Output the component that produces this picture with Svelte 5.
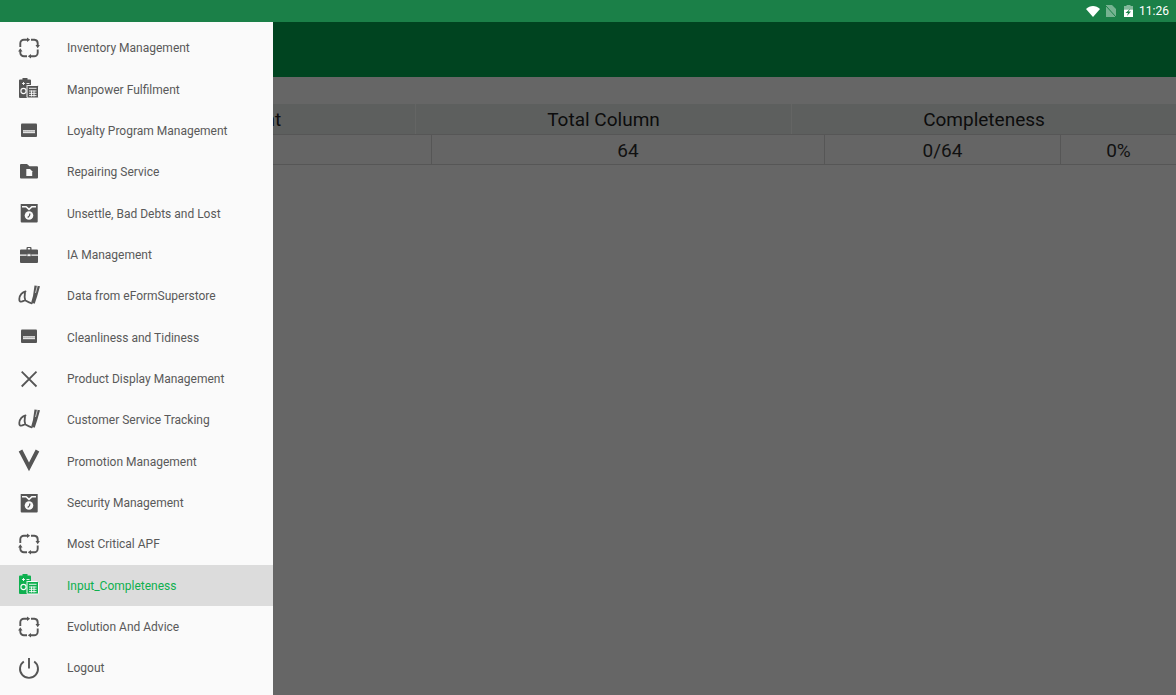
<script>
  const items = [
    ['Inventory Management', 'cycle'],
    ['Manpower Fulfilment', 'calc'],
    ['Loyalty Program Management', 'card'],
    ['Repairing Service', 'folder'],
    ['Unsettle, Bad Debts and Lost', 'box'],
    ['IA Management', 'case'],
    ['Data from eFormSuperstore', 'sign'],
    ['Cleanliness and Tidiness', 'card'],
    ['Product Display Management', 'cross'],
    ['Customer Service Tracking', 'sign'],
    ['Promotion Management', 'vee'],
    ['Security Management', 'box'],
    ['Most Critical APF', 'cycle'],
    ['Input_Completeness', 'calc'],
    ['Evolution And Advice', 'cycle'],
    ['Logout', 'power']
  ];
  const active = 'Input_Completeness';
</script>

<div class="screen">
  <header class="status">
    <svg class="wifi" width="14" height="11" viewBox="0 0 14 11"><path d="M0 3C4-1 10-1 14 3L7 11z" fill="#fff"/></svg>
    <svg class="sim" width="10" height="12" viewBox="0 0 10 12"><path d="M0 0h6l4 4v8H0z" fill="#fff" opacity=".4"/><path d="M0 1l10 11" stroke="#1b8048" stroke-width="1"/></svg>
    <svg class="batt" width="9" height="12" viewBox="0 0 9 12"><path d="M2.500 0h4v1H9v3.500H0V1h2.500z" fill="#fff" opacity=".45"/><path d="M0 4.500h9V12H0z" fill="#fff"/><path d="M6.500 3.500L1.500 8H4l-1 3L7 6.500H4.500z" fill="#1b8048"/></svg>
    <span class="time">11:26</span>
  </header>

  <div class="toolbar"></div>

  <main class="content">
    <div class="thead">
      <div class="th w1">Total Department</div>
      <div class="th w2">Total Column</div>
      <div class="th w3">Completeness</div>
    </div>
    <div class="tbody">
      <div class="td c1"></div>
      <div class="td c2">64</div>
      <div class="td c3">0/64</div>
      <div class="td c4">0%</div>
    </div>
  </main>

  <nav class="drawer">
    {#each items as [label, icon]}
      <div class="item" class:active={label === active}>
        <svg class="icon" width="24" height="24" viewBox="0 0 24 24">
          {#if icon === 'cycle'}
            <g fill="none" stroke="currentColor" stroke-width="1.900">
              <path d="M3.300 11V7.300a3.600 3.600 0 0 1 3.600-3.600H10.500"/>
              <path d="M14 3.700h3.400a3.600 3.600 0 0 1 3.300 3.600V9.500"/>
              <path d="M20.700 13.500v3.200a3.600 3.600 0 0 1-3.600 3.600H13.500"/>
              <path d="M10 20.300H6.900a3.600 3.600 0 0 1-3.600-3.600V15"/>
            </g>
            <path fill="currentColor" d="M10 1.500L13.200 3.700 10 5.900zM18.500 9h4.400L20.700 12.200zM14 18.100v4.400L10.800 20.300zM1.100 15.500h4.400L3.300 12.300z"/>
          {:else if icon === 'calc'}
            <path fill="currentColor" d="M2 3.500a1 1 0 0 1 1-1h2.500V1h5v1.500H13a1 1 0 0 1 1 1V21H3a1 1 0 0 1-1-1z"/>
            <path fill="none" stroke="#fafafa" stroke-width=".9" d="M6.500 5v3M5 6.500h3M9.500 6.500h3M9.500 8.500h3"/>
            <circle cx="6.500" cy="14" r="2.600" fill="none" stroke="#fafafa" stroke-width="1.100"/>
            <rect x="10" y="8.500" width="11.500" height="12.500" rx="1" fill="currentColor" stroke="#fafafa" stroke-width="1"/>
            <path fill="none" stroke="#fafafa" stroke-width=".9" d="M12 11.300h7.500M12 14h7.500M12 16.300h7.500M12 18.600h7.500M14.500 13.500v6M17 13.500v6"/>
          {:else if icon === 'card'}
            <rect x="4" y="4.500" width="16" height="13.500" rx="1" fill="currentColor"/>
            <rect x="6" y="11" width="12" height="3.200" fill="#e4e4e4"/>
            <path stroke="currentColor" stroke-width=".8" stroke-dasharray="1.100 .9" d="M6.500 12.200H17.500"/>
          {:else if icon === 'folder'}
            <path fill="currentColor" d="M3 5a1 1 0 0 1 1-1h6l2.500 2.200H20a1 1 0 0 1 1 1V17.500a1 1 0 0 1-1 1H4a1 1 0 0 1-1-1z"/>
            <path fill="#fafafa" d="M9.300 9h3.700l2.200 2.200v4.800H9.300z"/>
          {:else if icon === 'box'}
            <path fill="currentColor" d="M3.700 3h17v17.500a1 1 0 0 1-1 1h-15a1 1 0 0 1-1-1z"/>
            <path fill="#fafafa" d="M5 5h4.500L12 7.300 14.500 5H19v1.500h-3.800L12 9.500 8.800 6.500H5z"/>
            <circle cx="12" cy="14.500" r="4.300" fill="#fafafa"/>
            <path fill="none" stroke="currentColor" stroke-width="1.200" d="M13 12.500l-.6 2.300-1.700 1.700"/>
          {:else if icon === 'case'}
            <path fill="currentColor" d="M3 7.500a1 1 0 0 1 1-1h5.500V5a1 1 0 0 1 1-1h3a1 1 0 0 1 1 1v1.500H20a1 1 0 0 1 1 1v4H3zM3 12.800h18V19a1 1 0 0 1-1 1H4a1 1 0 0 1-1-1z"/>
            <path fill="#fafafa" d="M10.800 5h2.400v1.500h-2.400z"/>
            <rect x="10" y="10.800" width="4" height="2.800" rx="1" fill="#fafafa" stroke="currentColor" stroke-width=".8"/>
          {:else if icon === 'sign'}
            <path fill="none" stroke="currentColor" stroke-width="1.800" stroke-linecap="round" stroke-linejoin="round" d="M8.500 7.500C5.500 8 2.500 11 2.300 15c-.1 2.500 1 3 2.500 2.500s3-1.500 3.500-1.200M8 8.500C7.500 11 7.500 14 8.300 16.500 10 17.500 12.500 19 14.800 19.300"/>
            <path fill="currentColor" d="M17.500 1.500l5.500.7-2 7-1 3.500-2.300 7-3.500-1.200 1.800-6.500z"/>
            <path stroke="#fafafa" stroke-width=".7" d="M20.300 2L18.500 9"/>
          {:else if icon === 'cross'}
            <path fill="none" stroke="currentColor" stroke-width="1.800" d="M4.700 4.700l14.800 14.800M19.500 4.700l-14.800 14.800"/>
          {:else if icon === 'vee'}
            <path fill="none" stroke="currentColor" stroke-width="4" d="M3.500 1.500L12 18 20.500 1.500"/>
          {:else if icon === 'power'}
            <path fill="none" stroke="currentColor" stroke-width="1.900" d="M12 2V12.500M6.800 5.500a9 9 0 1 0 10.400 0"/>
          {/if}
        </svg>
        <span class="label">{label}</span>
      </div>
    {/each}
  </nav>
</div>

<style>
  :global(body) { margin: 0; }
  .screen {
    position: relative;
    width: 1176px;
    height: 695px;
    overflow: hidden;
    background: #666;
    font-family: Roboto, "Liberation Sans", sans-serif;
    display: flex;
    flex-direction: column;
  }
  .status {
    height: 22px;
    flex: none;
    background: #1b8048;
    display: flex;
    align-items: center;
    justify-content: flex-end;
    padding-right: 7px;
    box-sizing: border-box;
    color: #fff;
  }
  .wifi { margin-right: 6px; }
  .sim { margin-right: 8px; }
  .batt { margin-right: 6px; }
  .time { font-size: 12px; }
  .toolbar { height: 55px; flex: none; background: #004420; }
  .content { flex: 1; padding-top: 27px; }
  .thead {
    display: flex;
    height: 30px;
    background: #5d5f5e;
  }
  .th {
    display: flex;
    align-items: center;
    justify-content: center;
    box-sizing: border-box;
    font-size: 19px;
    color: #0c0c0c;
    border-right: 1px solid #646564;
  }
  .w1 { width: 416px; }
  .w2 { width: 376px; }
  .w3 { width: 384px; border-right: 0; }
  .tbody {
    display: flex;
    height: 31px;
    box-sizing: border-box;
    border-top: 1px solid #565656;
    border-bottom: 1px solid #565656;
    background: #656565;
  }
  .td {
    display: flex;
    align-items: center;
    justify-content: center;
    box-sizing: border-box;
    padding-top: 1px;
    font-size: 19px;
    color: #111;
    border-right: 1px solid #565656;
  }
  .c1 { width: 432px; }
  .c2 { width: 393px; }
  .c3 { width: 236px; }
  .c4 { width: 115px; border-right: 0; }
  .drawer {
    position: absolute;
    left: 0;
    top: 22px;
    bottom: 0;
    width: 273px;
    background: #fafafa;
    padding-top: 5.300px;
    box-sizing: border-box;
  }
  .item {
    height: 41.330px;
    display: flex;
    align-items: center;
    padding-left: 17px;
    color: #595959;
    font-size: 12px;
  }
  .label { padding-top: 1px; }
  .item .icon { flex: none; margin-right: 26px; color: #555; }
  .item.active { background: #dcdcdc; color: #0eb04f; }
  .item.active .icon { color: #0eb04f; }
</style>
